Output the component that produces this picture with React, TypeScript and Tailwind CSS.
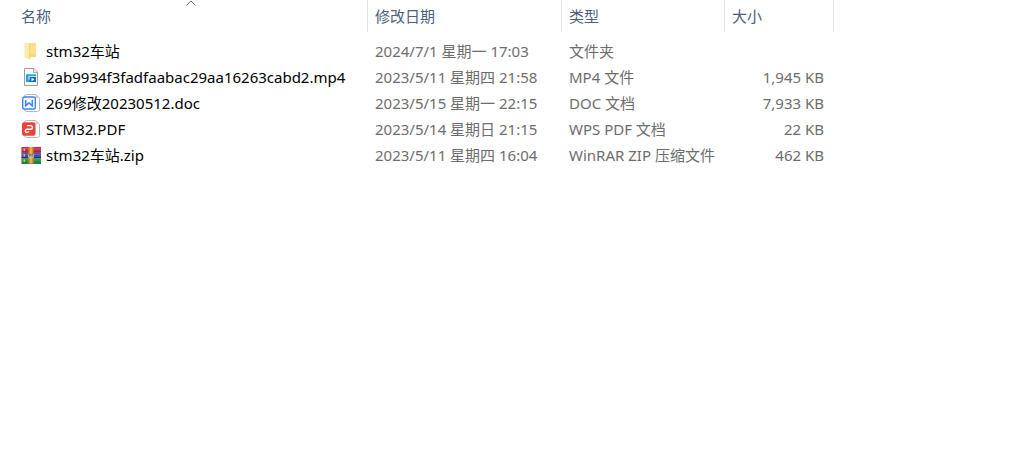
import type { ReactNode } from "react";

function FolderIcon() {
  return (
    <svg viewBox="0 0 20 20" className="size-5 shrink-0" aria-hidden="true">
      <path d="M6 2h9v14H6z" fill="#f7d774" />
      <path d="M7 2h8v11H7z" fill="#fbe18c" />
      <path d="M3.500 2H8l1.200 1.500V18.300l-5.700-1.800z" fill="#fdeaae" />
      <path d="M8.200 2.300l1 1.200V18.300l-1-.300z" fill="#f0cd6a" />
    </svg>
  );
}

function VideoIcon() {
  return (
    <svg viewBox="0 0 20 20" className="size-5 shrink-0" aria-hidden="true">
      <path d="M3.500 1.500H13L16.500 5v13.500h-13z" fill="#f8f8f8" stroke="#9b9ea1" />
      <path d="M12.500 1.500V5.500h4" fill="#ececec" stroke="#9b9ea1" strokeWidth=".8" />
      <path d="M5 7h10v2.200H7.500v3.600H9V15H5z" fill="#2ba0e2" />
      <path d="M5 7h10v1H5z" fill="#55c0f2" />
      <path d="M8.500 10H15v5H8.500z" fill="#1270b8" />
      <path d="M10.500 10.800l3 1.700-3 1.700z" fill="#fff" />
    </svg>
  );
}

function PageBehind() {
  return (
    <>
      <path
        d="M5.500 1.500h9L18.500 5v11.500a2 2 0 0 1-2 2h-11a2 2 0 0 1-2-2v-13a2 2 0 0 1 2-2z"
        fill="#fff"
        stroke="#b3b8c2"
      />
      <path d="M14.500 1.500V5h4z" fill="#c9cdd5" />
    </>
  );
}

function DocIcon() {
  return (
    <svg viewBox="0 0 20 20" className="size-5 shrink-0" aria-hidden="true">
      <PageBehind />
      <rect x="1.700" y="4" width="12.600" height="12" rx="1.800" fill="#fff" stroke="#3f83f8" strokeWidth="1.400" />
      <path d="M4.700 7v5.800L8 9.800l3.300 3V7" fill="none" stroke="#3f83f8" strokeWidth="1.600" />
    </svg>
  );
}

function PdfIcon() {
  return (
    <svg viewBox="0 0 20 20" className="size-5 shrink-0" aria-hidden="true">
      <PageBehind />
      <rect x="1" y="3.300" width="13.500" height="13.400" rx="2" fill="#e8443c" />
      <path
        d="M6 6.600h3.600a1.800 1.800 0 0 1 0 3.700H5.800a1.600 1.600 0 1 0 1.700 1.700"
        fill="none"
        stroke="#fff"
        strokeWidth="1.400"
      />
    </svg>
  );
}

function ArchiveIcon() {
  return (
    <svg viewBox="0 0 20 20" className="size-5 shrink-0" aria-hidden="true">
      <path d="M.5 2H20v5.500H.5z" fill="#c12a50" />
      <path d="M.5 3H20v1.500H.5z" fill="#dd4467" />
      <path d="M.5 6.600H20v1H.5z" fill="#7a1a38" />
      <path d="M.5 7.600H20V13H.5z" fill="#4a49a6" />
      <path d="M.5 8.600H20v1.300H.5z" fill="#6a68bd" />
      <path d="M.5 12.200H20v1H.5z" fill="#2a2a6a" />
      <path d="M.5 13.200H20V18.500H.5z" fill="#228c45" />
      <path d="M.5 14.200H20v1.300H.5z" fill="#37a85a" />
      <path d="M.5 17.700H20v1H.5z" fill="#12582a" />
      <path d="M2.500 3.500h1.500v2.500H2.500zM2.500 9h1.500v2.500H2.500zM2.500 14.500h1.500V17H2.500z" fill="#e5b84b" />
      <path d="M7.500 2h5v16.500h-5z" fill="#d98a2c" />
      <path d="M9.300 2h1.500v16.500H9.300z" fill="#f3b850" />
      <path d="M7 9h6v4H7z" fill="#6b5a48" />
      <path d="M7.800 9.300v3h4.400v-3M10 9.500v2.500" fill="none" stroke="#f2e9d8" strokeWidth=".9" />
    </svg>
  );
}

type Entry = { icon: ReactNode; name: string; modified: string; type: string; size: string };

const entries: Entry[] = [
  { icon: <FolderIcon />, name: "stm32车站", modified: "2024/7/1 星期一 17:03", type: "文件夹", size: "" },
  {
    icon: <VideoIcon />,
    name: "2ab9934f3fadfaabac29aa16263cabd2.mp4",
    modified: "2023/5/11 星期四 21:58",
    type: "MP4 文件",
    size: "1,945 KB",
  },
  { icon: <DocIcon />, name: "269修改20230512.doc", modified: "2023/5/15 星期一 22:15", type: "DOC 文档", size: "7,933 KB" },
  { icon: <PdfIcon />, name: "STM32.PDF", modified: "2023/5/14 星期日 21:15", type: "WPS PDF 文档", size: "22 KB" },
  { icon: <ArchiveIcon />, name: "stm32车站.zip", modified: "2023/5/11 星期四 16:04", type: "WinRAR ZIP 压缩文件", size: "462 KB" },
];

function ColumnHeader({ label, sorted = false }: { label: string; sorted?: boolean }) {
  return (
    <th
      scope="col"
      aria-sort={sorted ? "ascending" : undefined}
      className="relative h-8 border-r border-[#e5e5e5] p-0 font-normal"
    >
      {sorted && (
        <svg viewBox="0 0 10 6" className="absolute top-0 left-1/2 h-1.5 w-2.5 -translate-x-1/2" aria-hidden="true">
          <path d="M.5 5.500L5 1l4.500 4.500" fill="none" stroke="#777" />
        </svg>
      )}
      <button type="button" className="block h-8 w-full px-[7px] text-left text-[#4c607a]">
        {label}
      </button>
    </th>
  );
}

export default function App() {
  return (
    <main
      lang="zh-CN"
      className="min-h-screen bg-white pl-3.5 font-['Noto_Sans','Noto_Sans_CJK_SC',sans-serif] text-[15px] leading-[26px] text-[#6d6d6d]"
    >
      <table className="w-full table-fixed border-separate border-spacing-0 whitespace-nowrap">
        <colgroup>
          <col className="w-[354px]" />
          <col className="w-[194px]" />
          <col className="w-[163px]" />
          <col className="w-[109px]" />
          <col />
        </colgroup>
        <thead>
          <tr>
            <ColumnHeader label="名称" sorted />
            <ColumnHeader label="修改日期" />
            <ColumnHeader label="类型" />
            <ColumnHeader label="大小" />
            <td />
          </tr>
        </thead>
        <tbody className="before:block before:h-1.5">
          {entries.map((entry) => (
            <tr key={entry.name}>
              <td className="px-[7px] py-0 text-black">
                <div className="flex items-center gap-[5px]">
                  {entry.icon}
                  <span>{entry.name}</span>
                </div>
              </td>
              <td className="px-[7px] py-0">{entry.modified}</td>
              <td className="px-[7px] py-0">{entry.type}</td>
              <td className="py-0 pr-2.5 text-right">{entry.size}</td>
              <td />
            </tr>
          ))}
        </tbody>
      </table>
    </main>
  );
}
